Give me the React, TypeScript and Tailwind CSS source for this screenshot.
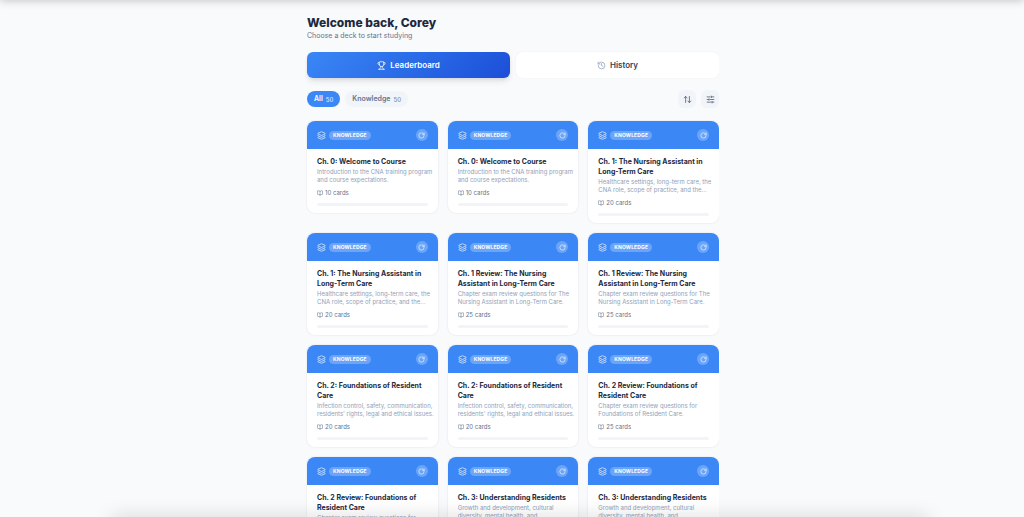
import { useState } from "react";
import {
  ArrowUpDown,
  BookOpen,
  History,
  Layers,
  RotateCw,
  SlidersHorizontal,
  Trophy,
} from "lucide-react";

type Deck = {
  title: string;
  description: string;
  cards: number;
  progress: number;
};

const INTRO = "Introduction to the CNA training program and course expectations.";
const SETTINGS = "Healthcare settings, long-term care, the CNA role, scope of practice, and the...";
const INFECTION = "Infection control, safety, communication, residents' rights, legal and ethical issues.";
const GROWTH = "Growth and development, cultural diversity, mental health, and...";
const REVIEW_1 = "Chapter exam review questions for The Nursing Assistant in Long-Term Care.";
const REVIEW_2 = "Chapter exam review questions for Foundations of Resident Care.";

const DECKS: Deck[] = [
  { title: "Ch. 0: Welcome to Course", description: INTRO, cards: 10, progress: 0 },
  { title: "Ch. 0: Welcome to Course", description: INTRO, cards: 10, progress: 0 },
  { title: "Ch. 1: The Nursing Assistant in Long-Term Care", description: SETTINGS, cards: 20, progress: 0 },
  { title: "Ch. 1: The Nursing Assistant in Long-Term Care", description: SETTINGS, cards: 20, progress: 0 },
  { title: "Ch. 1 Review: The Nursing Assistant in Long-Term Care", description: REVIEW_1, cards: 25, progress: 0 },
  { title: "Ch. 1 Review: The Nursing Assistant in Long-Term Care", description: REVIEW_1, cards: 25, progress: 0 },
  { title: "Ch. 2: Foundations of Resident Care", description: INFECTION, cards: 20, progress: 0 },
  { title: "Ch. 2: Foundations of Resident Care", description: INFECTION, cards: 20, progress: 0 },
  { title: "Ch. 2 Review: Foundations of Resident Care", description: REVIEW_2, cards: 25, progress: 0 },
  { title: "Ch. 2 Review: Foundations of Resident Care", description: REVIEW_2, cards: 25, progress: 0 },
  { title: "Ch. 3: Understanding Residents", description: GROWTH, cards: 20, progress: 0 },
  { title: "Ch. 3: Understanding Residents", description: GROWTH, cards: 20, progress: 0 },
];

function DeckCard({ deck }: { deck: Deck }) {
  return (
    <article className="overflow-hidden rounded-lg bg-white shadow-[0_0_2px_rgba(15,23,42,0.12)]">
      <div className="flex h-7 items-center bg-[#3b87f6] px-[10px] text-white">
        <Layers className="size-[9px] opacity-90" strokeWidth={2} />
        <span className="ml-[3px] rounded-full bg-white/25 px-1 text-[5px] leading-[9px] font-bold tracking-wide">
          KNOWLEDGE
        </span>
        <button
          type="button"
          aria-label="Restart deck"
          className="ml-auto flex size-3 items-center justify-center rounded-full bg-white/25"
        >
          <RotateCw className="size-[7px]" strokeWidth={2} />
        </button>
      </div>
      <div className="px-[10px] pt-2 pb-[7px]">
        <h2 className="text-[7px] leading-[10px] font-bold text-slate-800">{deck.title}</h2>
        <p className="-mr-2 mt-px line-clamp-2 text-[6px] leading-[8px] text-slate-400">
          {deck.description}
        </p>
        <div className="mt-1 flex items-center gap-[2px] text-[6px] leading-[10px] text-slate-500">
          <BookOpen className="size-[6px]" strokeWidth={2} />
          {deck.cards} cards
        </div>
        <div className="mt-[5px] h-[3px] overflow-hidden rounded-full bg-slate-100">
          <div className="h-full bg-[#3b87f6]" style={{ width: `${deck.progress}%` }}></div>
        </div>
      </div>
    </article>
  );
}

export default function App() {
  const [filter, setFilter] = useState<"all" | "knowledge">("all");

  const pill = (active: boolean) =>
    active
      ? "flex h-4 items-center gap-[3px] rounded-full bg-[#3b87f6] px-[7px] text-[7px] font-semibold text-white"
      : "flex h-4 items-center gap-[3px] rounded-full bg-slate-100 px-[7px] text-[7px] font-semibold text-slate-500";

  return (
    <div className="relative h-screen overflow-hidden bg-[#f9fafc] font-['Inter',sans-serif]">
      {/* shadows cast by the bars above and below the scroll area */}
      <div className="pointer-events-none absolute inset-x-0 bottom-full z-10 h-4 shadow-[0_0_10px_rgba(0,0,0,0.25)]"></div>
      <div className="pointer-events-none absolute top-full right-24 left-28 z-10 h-4 shadow-[0_0_20px_rgba(0,0,0,0.15)]"></div>

      <main className="mx-auto h-full w-full max-w-[414px] overflow-y-auto pt-4 pl-0.5 [scrollbar-width:none]">
        <h1 className="text-[12px] leading-[14px] font-extrabold text-slate-800">Welcome back, Corey</h1>
        <p className="mt-px text-[7px] leading-[10px] text-slate-500">Choose a deck to start studying</p>

        <div className="mt-[11px] grid grid-cols-2 gap-[6px] text-[8px] font-semibold">
          <button
            type="button"
            className="flex h-[26px] items-center justify-center gap-1 rounded-md bg-linear-135 from-[#3b87f6] to-[#1d4ed8] text-white shadow-md"
          >
            <Trophy className="size-[9px]" strokeWidth={2} />
            Leaderboard
          </button>
          <button
            type="button"
            className="flex h-[26px] items-center justify-center gap-1 rounded-md bg-white text-slate-700 shadow-[0_0_1px_rgba(15,23,42,0.12)]"
          >
            <History className="size-[9px] text-slate-400" strokeWidth={2} />
            History
          </button>
        </div>

        <div className="mt-3 flex items-center gap-[5px]">
          <button type="button" className={pill(filter === "all")} onClick={() => setFilter("all")}>
            All <span className="text-[6px] font-medium opacity-80">50</span>
          </button>
          <button type="button" className={pill(filter === "knowledge")} onClick={() => setFilter("knowledge")}>
            Knowledge <span className="text-[6px] font-medium opacity-80">50</span>
          </button>
          <button
            type="button"
            aria-label="Sort decks"
            className="ml-auto flex size-[18px] items-center justify-center rounded-md bg-slate-100 text-slate-600"
          >
            <ArrowUpDown className="size-[9px]" strokeWidth={2} />
          </button>
          <button
            type="button"
            aria-label="Filter decks"
            className="flex size-[18px] items-center justify-center rounded-md bg-slate-100 text-slate-600"
          >
            <SlidersHorizontal className="size-[9px]" strokeWidth={2} />
          </button>
        </div>

        <div className="mt-[13px] grid grid-cols-3 items-start gap-[10px] pb-4">
          {DECKS.map((deck, i) => (
            <DeckCard key={i} deck={deck} />
          ))}
        </div>
      </main>
    </div>
  );
}
